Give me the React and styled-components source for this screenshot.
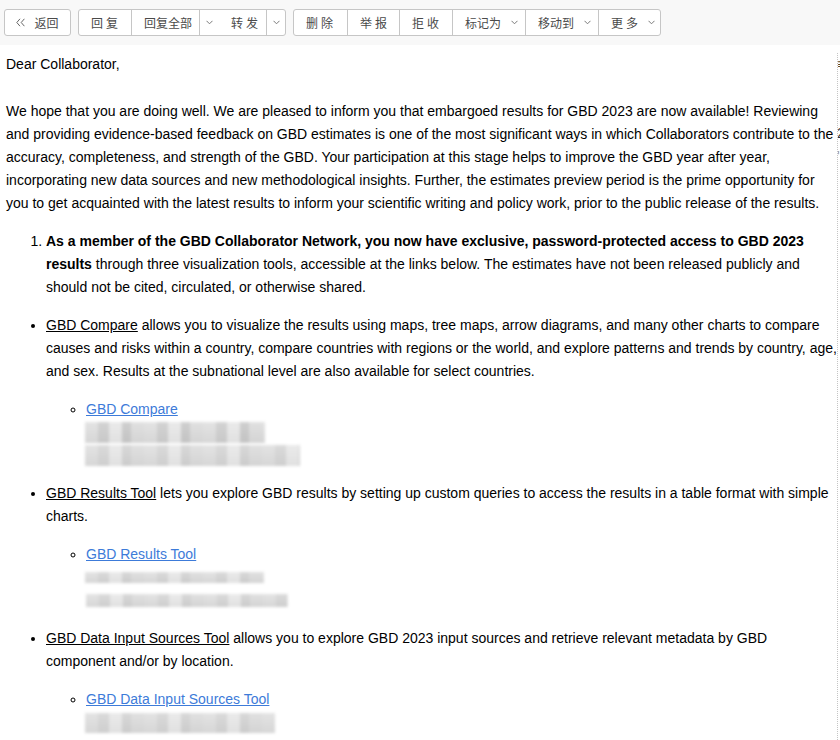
import React from 'react';
import styled, { createGlobalStyle } from "styled-components";

const GlobalStyle = createGlobalStyle`
    html, body {
        margin: 0;
        padding: 0;
        background: #ffffff;
    }
    body {
        font-family: "Liberation Sans", Arial, sans-serif;
        overflow: hidden;
    }
`;

const cjk = `"Noto Sans CJK SC", "Liberation Sans", sans-serif`;

function Chevron() {
    return (
        <svg width="7" height="5" viewBox="0 0 7 5">
            <polyline points="0.5,0.8 3.5,3.8 6.5,0.8" fill="none" stroke="#7a7a7a" strokeWidth="1" />
        </svg>
    );
}

function BackArrows() {
    return (
        <svg width="9" height="9" viewBox="0 0 9 9">
            <polyline points="4,0.8 0.8,4.5 4,8.2" fill="none" stroke="#666" strokeWidth="1" />
            <polyline points="8.4,0.8 5.2,4.5 8.4,8.2" fill="none" stroke="#666" strokeWidth="1" />
        </svg>
    );
}

const toolbarGroups = [
    [
        { label: "回 复", w: 52 },
        { label: "回复全部", w: 68 },
        { caret: true, w: 20 },
        { label: "转 发", w: 47 },
        { caret: true, w: 19 },
    ],
    [
        { label: "删 除", w: 53 },
        { label: "举 报", w: 52 },
        { label: "拒 收", w: 53 },
        { label: "标记为", w: 73, menu: true },
        { label: "移动到", w: 73, menu: true },
        { label: "更 多", w: 62, menu: true },
    ],
];

function Toolbar() {
    return (
        <Bar>
            <Group>
                <BackButton>
                    <BackArrows />
                    <span>返回</span>
                </BackButton>
            </Group>
            {
                toolbarGroups.map((group, gi) => (
                    <Group key={gi}>
                        {
                            group.map((item, index) => (
                                item.caret ? (
                                    <CaretButton key={index} $w={item.w}>
                                        <Chevron />
                                    </CaretButton>
                                ) : (
                                    <Button key={index} $w={item.w}>
                                        <Label $spaced={item.label.includes(" ")}>{item.label.replace(" ", "")}</Label>
                                        {item.menu && <Chevron />}
                                    </Button>
                                )
                            ))
                        }
                    </Group>
                ))
            }
        </Bar>
    );
}

function Redacted({ rows }) {
    return (
        <>
            {
                rows.map((row, index) => (
                    <RedactLine key={index}>
                        <Smudge $w={row.w} $h={row.h} $x={row.x || 0} $dark={row.dark} />
                    </RedactLine>
                ))
            }
        </>
    );
}

function App() {
    return (
        <>
            <GlobalStyle />
            <Page>
                <Toolbar />
                <Body>
                    <Mail>
                        <Line>Dear Collaborator,</Line>
                        <Spacer />
                        <Paragraph>
                            We hope that you are doing well. We are pleased to inform you that embargoed results for GBD 2023 are now available! Reviewing
                            and providing evidence-based feedback on GBD estimates is one of the most significant ways in which Collaborators contribute to the
                            accuracy, completeness, and strength of the GBD. Your participation at this stage helps to improve the GBD year after year,
                            incorporating new data sources and new methodological insights. Further, the estimates preview period is the prime opportunity for
                            you to get acquainted with the latest results to inform your scientific writing and policy work, prior to the public release of the results.
                        </Paragraph>

                        <Numbered>
                            <li>
                                <strong>As a member of the GBD Collaborator Network, you now have exclusive, password-protected access to GBD 2023 results</strong> through three visualization tools, accessible at the links below. The estimates have not been released publicly and should not be cited, circulated, or otherwise shared.
                            </li>
                        </Numbered>

                        <Bullets>
                            <li>
                                <Underlined>GBD Compare</Underlined> allows you to visualize the results using maps, tree maps, arrow diagrams, and many other charts to compare causes and risks within a country, compare countries with regions or the world, and explore patterns and trends by country, age, and sex. Results at the subnational level are also available for select countries.
                                <Circles>
                                    <li>
                                        <Link href="#compare">GBD Compare</Link>
                                        <Redacted rows={[
                                            { w: 180, h: 21, dark: true },
                                            { w: 215, h: 21 },
                                        ]} />
                                    </li>
                                </Circles>
                            </li>
                        </Bullets>

                        <Bullets>
                            <li>
                                <Underlined>GBD Results Tool</Underlined> lets you explore GBD results by setting up custom queries to access the results in a table format with simple charts.
                                <Circles>
                                    <li>
                                        <Link href="#results">GBD Results Tool</Link>
                                        <Redacted rows={[
                                            { w: 179, h: 11 },
                                            { w: 202, h: 13, x: 1 },
                                        ]} />
                                    </li>
                                </Circles>
                            </li>
                        </Bullets>

                        <Bullets>
                            <li>
                                <Underlined>GBD Data Input Sources Tool</Underlined> allows you to explore GBD 2023 input sources and retrieve relevant metadata by GBD component and/or by location.
                                <Circles>
                                    <li>
                                        <Link href="#sources">GBD Data Input Sources Tool</Link>
                                        <Redacted rows={[
                                            { w: 190, h: 20 },
                                        ]} />
                                    </li>
                                </Circles>
                            </li>
                        </Bullets>
                    </Mail>
                    <Side>
                        <SideLine $color="#5a4a20">≡</SideLine>
                        <SideLine>&nbsp;</SideLine>
                        <SideLine>&nbsp;</SideLine>
                        <SideLine>2</SideLine>
                        <SideLine $color="#999">'</SideLine>
                    </Side>
                </Body>
            </Page>
        </>
    );
}

export default App;

const Page = styled.div`
    width: 840px;
    height: 740px;
    overflow: hidden;
    display: flex;
    flex-direction: column;
    color: #000;
`;

const Bar = styled.div`
    height: 45px;
    flex: none;
    box-sizing: border-box;
    padding: 9px 0 0 4px;
    display: flex;
    align-items: flex-start;
    gap: 7px;
    background: #f8f8f8;
`;

const Group = styled.div`
    display: flex;
    height: 27px;
    box-sizing: border-box;
    border: 1px solid #c6c6c6;
    border-radius: 3px;
    background: #ffffff;
    overflow: hidden;
`;

const Button = styled.div`
    width: ${p => p.$w}px;
    box-sizing: border-box;
    display: flex;
    align-items: center;
    gap: 10px;
    padding-left: 12px;
    font-family: ${cjk};
    font-size: 12px;
    color: #4a4a4a;
    cursor: pointer;

    & + & {
        border-left: 1px solid #c6c6c6;
    }
`;

const Label = styled.span`
    letter-spacing: ${p => p.$spaced ? "3px" : "0"};
    margin-right: ${p => p.$spaced ? "-3px" : "0"};
`;

const CaretButton = styled.div`
    width: ${p => p.$w}px;
    box-sizing: border-box;
    display: flex;
    align-items: center;
    justify-content: center;
    border-left: 1px solid #c6c6c6;
    cursor: pointer;
`;

const BackButton = styled.div`
    width: 65px;
    display: flex;
    align-items: center;
    justify-content: center;
    gap: 9px;
    font-family: ${cjk};
    font-size: 12px;
    color: #4a4a4a;
    cursor: pointer;
`;

const Body = styled.div`
    flex: 1;
    display: flex;
    min-height: 0;
`;

const Mail = styled.div`
    width: 837px;
    flex: none;
    box-sizing: border-box;
    padding: 8px 0 0 6px;
    overflow: hidden;
    font-size: 14px;
    line-height: 23px;
`;

const Side = styled.div`
    flex: 1;
    margin-top: 8px;
    border-left: 1px dotted #c4c4c4;
    overflow: hidden;
    font-size: 14px;
    line-height: 23px;
    white-space: nowrap;
`;

const SideLine = styled.div`
    color: ${p => p.$color || "#333"};
    margin-left: -1px;
`;

const Line = styled.div``;

const Spacer = styled.div`
    height: 24px;
`;

const Paragraph = styled.div`
    margin: 0;
`;

const Numbered = styled.ol`
    margin: 15px 0;
    padding-left: 40px;
`;

const Bullets = styled.ul`
    margin: 15px 0;
    padding-left: 40px;
    list-style: disc;
`;

const Circles = styled.ul`
    margin: 15px 0;
    padding-left: 40px;
    list-style: circle;
`;

const Underlined = styled.span`
    text-decoration: underline;
`;

const Link = styled.a`
    color: #3d7bd9;
    text-decoration: underline;
`;

const RedactLine = styled.div`
    height: 23px;
    display: flex;
    align-items: center;
`;

const Smudge = styled.span`
    display: block;
    width: ${p => p.$w}px;
    height: ${p => p.$h}px;
    margin-left: ${p => p.$x - 1}px;
    filter: blur(1.6px);
    background:
        repeating-linear-gradient(90deg,
            rgba(0, 0, 0, 0) 0 13px,
            rgba(0, 0, 0, ${p => p.$dark ? 0.07 : 0.04}) 13px 24px,
            rgba(255, 255, 255, 0.25) 24px 37px,
            rgba(0, 0, 0, ${p => p.$dark ? 0.09 : 0.05}) 37px 46px,
            rgba(0, 0, 0, 0.01) 46px 59px),
        linear-gradient(180deg, #e3e3e3, #d6d6d6);
`;
